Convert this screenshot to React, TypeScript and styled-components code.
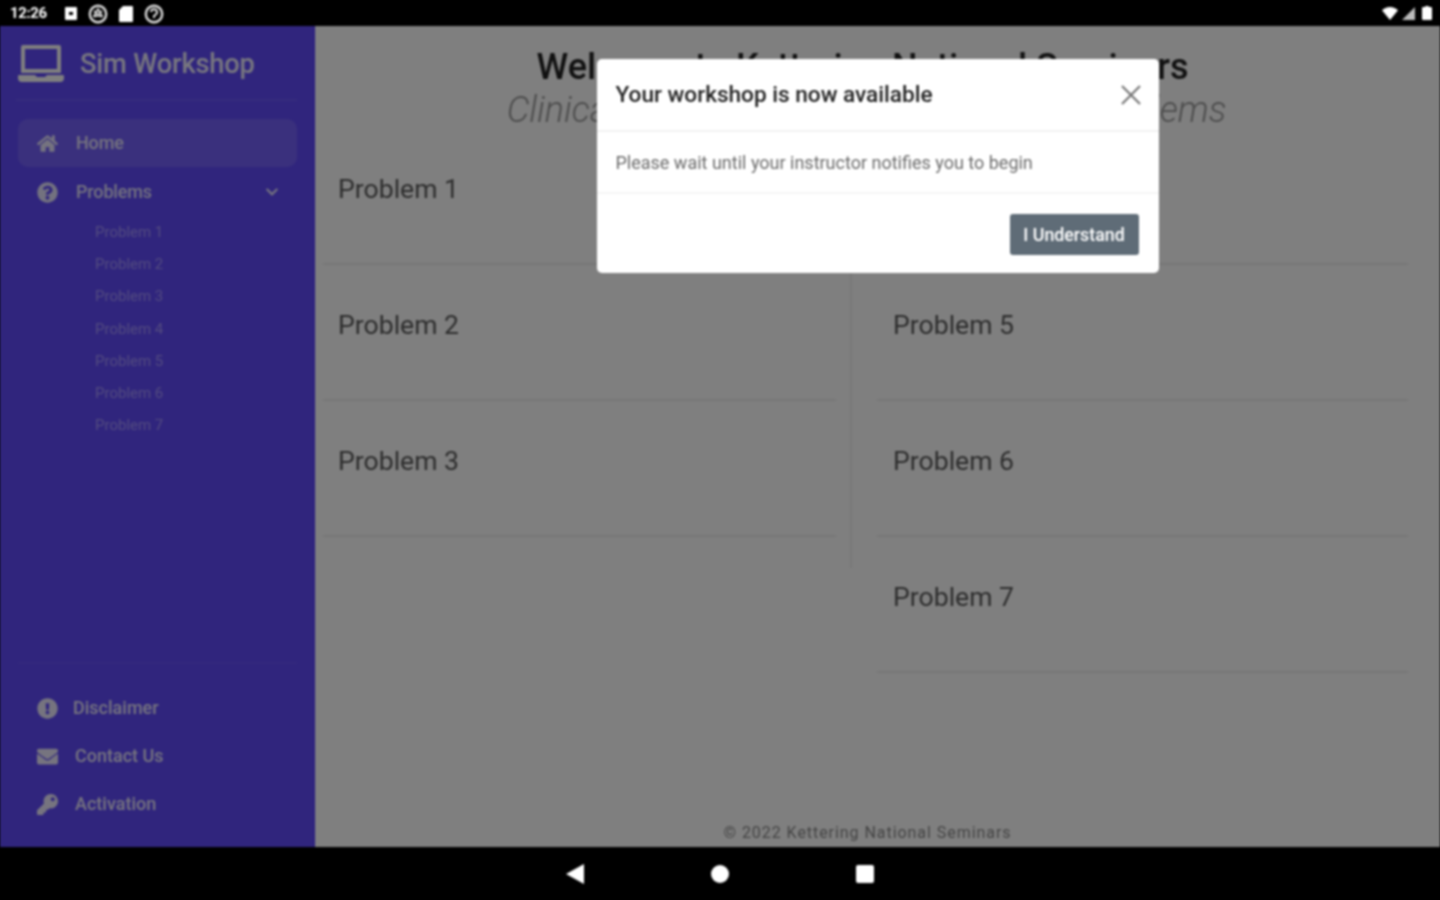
import React from 'react';
import styled, { createGlobalStyle } from 'styled-components';
import { FaChevronDown, FaEnvelope, FaExclamationCircle, FaHome, FaKey, FaQuestionCircle } from 'react-icons/fa';

const GlobalStyle = createGlobalStyle`
  html, body, #root {
    margin: 0;
    height: 100%;
    background: #000;
  }
  * {
    box-sizing: border-box;
  }
  body {
    font-family: Roboto, "Liberation Sans", sans-serif;
    overflow: hidden;
  }
`;

const problemNames = [1, 2, 3, 4, 5, 6, 7].map((n) => `Problem ${n}`);

function LaptopIcon() {
  return (
    <svg width="46" height="38" viewBox="0 0 46 38" fill="#fff">
      <path d="M5 0h36a2 2 0 0 1 2 2v26H3V2a2 2 0 0 1 2-2zm2 4v20h32V4z" fillRule="evenodd" />
      <path d="M1 30h16l2 2h8l2-2h16a1 1 0 0 1 1 1v2a4 4 0 0 1-4 4H4a4 4 0 0 1-4-4v-2a1 1 0 0 1 1-1z" />
    </svg>
  );
}

function StatusIcons() {
  return (
    <StatusGroup>
      <svg width="12" height="13" viewBox="0 0 12 13">
        <path d="M1 0h10a1 1 0 0 1 1 1v11a1 1 0 0 1-1 1H1a1 1 0 0 1-1-1V1a1 1 0 0 1 1-1zm3 5v3h4V5z" fill="#fff" fillRule="evenodd" />
      </svg>
      <svg width="20" height="20" viewBox="0 0 20 20" fill="none" stroke="#ddd">
        <circle cx="10" cy="10" r="8.2" strokeWidth="2.4" />
        <path d="M10 5l4 7H6zM6 7l8 6M14 7l-8 6" strokeWidth="1.6" />
      </svg>
      <svg width="14" height="16" viewBox="0 0 14 16">
        <path d="M4 0h9a1 1 0 0 1 1 1v14a1 1 0 0 1-1 1H1a1 1 0 0 1-1-1V4z" fill="#fff" />
      </svg>
      <svg width="20" height="20" viewBox="0 0 20 20" fill="none" stroke="#ddd">
        <circle cx="10" cy="10" r="8.2" strokeWidth="2.4" />
        <path d="M7 8a3 3 0 1 1 4 3l-1 1v2" strokeWidth="2" />
      </svg>
    </StatusGroup>
  );
}

function SystemIcons() {
  return (
    <SystemGroup>
      <svg width="16" height="13" viewBox="0 0 18 14" preserveAspectRatio="none">
        <path d="M0 3.500C2 1.500 5.500 0 9 0s7 1.500 9 3.500L9 14z" fill="#fff" />
      </svg>
      <TriangleIcon width="13" height="13" viewBox="0 0 14 14">
        <path d="M14 0v14H0z" fill="#bbb" />
      </TriangleIcon>
      <svg width="10" height="14" viewBox="0 0 9 14" preserveAspectRatio="none">
        <path d="M3 0h3v1h2a1 1 0 0 1 1 1v11a1 1 0 0 1-1 1H1a1 1 0 0 1-1-1V2a1 1 0 0 1 1-1h2z" fill="#fff" />
      </svg>
    </SystemGroup>
  );
}

export default function App(): React.ReactElement {
  return (
    <Screen>
      <GlobalStyle />
      <StatusBar>
        <Clock>12:26</Clock>
        <StatusIcons />
        <SystemIcons />
      </StatusBar>
      <Stage>
        <Sidebar>
          <Brand>
            <LaptopIcon />
            <BrandName>Sim Workshop</BrandName>
          </Brand>
          <NavItem $active>
            <FaHome />
            <NavLabel>Home</NavLabel>
          </NavItem>
          <NavItem>
            <FaQuestionCircle />
            <NavLabel>Problems</NavLabel>
            <Chevron>
              <FaChevronDown />
            </Chevron>
          </NavItem>
          <SubList>
            {problemNames.map((name) => (
              <SubItem key={name}>{name}</SubItem>
            ))}
          </SubList>
          <BottomNav>
            <BottomItem $gap={15}>
              <FaExclamationCircle />
              <NavLabel>Disclaimer</NavLabel>
            </BottomItem>
            <BottomItem $gap={17}>
              <FaEnvelope />
              <NavLabel>Contact Us</NavLabel>
            </BottomItem>
            <BottomItem $gap={17}>
              <FaKey />
              <NavLabel>Activation</NavLabel>
            </BottomItem>
          </BottomNav>
        </Sidebar>
        <Main>
          <Heading>
            <Title>Welcome to Kettering National Seminars</Title>
            <Subtitle>Clinical Case Simulations Workshop - Problems</Subtitle>
          </Heading>
          <Columns>
            <LeftColumn>
              {problemNames.slice(0, 3).map((name) => (
                <ProblemRow key={name}>{name}</ProblemRow>
              ))}
            </LeftColumn>
            <RightColumn>
              {problemNames.slice(3).map((name) => (
                <ProblemRow key={name}>{name}</ProblemRow>
              ))}
            </RightColumn>
          </Columns>
          <Footer>© 2022 Kettering National Seminars</Footer>
        </Main>
        <Backdrop>
          <Modal>
            <ModalHeader>
              <ModalTitle>Your workshop is now available</ModalTitle>
              <CloseIcon width="20" height="20" viewBox="0 0 20 20">
                <path d="M1 1l18 18M19 1L1 19" />
              </CloseIcon>
            </ModalHeader>
            <ModalBody>Please wait until your instructor notifies you to begin</ModalBody>
            <ModalFooter>
              <UnderstandButton>I Understand</UnderstandButton>
            </ModalFooter>
          </Modal>
        </Backdrop>
      </Stage>
      <NavBar>
        <svg width="18" height="20" viewBox="0 0 18 20">
          <path d="M18 0v20L0 10z" fill="#fff" />
        </svg>
        <HomeDot />
        <RecentSquare />
      </NavBar>
    </Screen>
  );
}

const Screen = styled.div`
  width: 1440px;
  height: 900px;
  display: flex;
  flex-direction: column;
  filter: blur(0.8px);
`;

const StatusBar = styled.div`
  height: 26px;
  flex: none;
  display: flex;
  align-items: center;
  padding: 0 8px 0 10px;
  background: #000;
`;

const Clock = styled.span`
  width: 55px;
  color: #fff;
  font-size: 15px;
  font-weight: 700;
  letter-spacing: -0.4px;
`;

const StatusGroup = styled.div`
  display: flex;
  align-items: center;
  gap: 11px;
  margin-top: 1px;
`;

const SystemGroup = styled.div`
  display: flex;
  align-items: center;
  gap: 7px;
  margin-left: auto;
`;

const TriangleIcon = styled.svg`
  margin-left: -3px;
`;

const Stage = styled.div`
  position: relative;
  flex: 1;
  min-height: 0;
  display: flex;
  background: #fff;
`;

const Sidebar = styled.aside`
  width: 315px;
  flex: none;
  display: flex;
  flex-direction: column;
  padding: 0 17px 0 18px;
  background: #604afa;
  border-right: 1px solid #4a30ff;
  color: #fff;
`;

const Brand = styled.div`
  height: 75px;
  margin: 0 0 18px -2px;
  padding: 2px 0 0 2px;
  display: flex;
  align-items: center;
  gap: 16px;
  border-bottom: 2px solid rgba(255, 255, 255, 0.08);

  svg {
    flex: none;
    margin-top: 1px;
  }
`;

const BrandName = styled.span`
  font-size: 27.3px;
  font-weight: 500;
  letter-spacing: -0.2px;
  color: #fff;
  opacity: 0.9;
`;

const NavLabel = styled.span`
  margin-top: -2px;
`;

const NavItem = styled.div<{ $active?: boolean }>`
  height: 48px;
  display: flex;
  align-items: center;
  gap: 18px;
  padding: 0 18px 0 19px;
  border-radius: 10px;
  font-size: 18px;
  font-weight: 500;
  letter-spacing: -0.15px;
  background: ${({ $active }) => ($active ? 'rgba(255, 255, 255, 0.13)' : 'transparent')};
  color: rgba(255, 255, 255, 0.85);

  & + & {
    margin-top: 1px;
  }

  svg {
    width: 21px;
    height: 21px;
    flex: none;
  }
`;

const Chevron = styled.span`
  margin-left: auto;
  display: flex;

  svg {
    width: 14px;
    height: 14px;
  }
`;

const SubList = styled.div`
  display: flex;
  flex-direction: column;
  padding-left: 77px;
`;

const SubItem = styled.div`
  height: 32.2px;
  line-height: 32px;
  font-size: 15px;
  color: #a596ff;
`;

const BottomNav = styled.div`
  margin: auto 0 19px;
  padding: 20px 0 0 19px;
  border-top: 2px solid rgba(255, 255, 255, 0.04);
`;

const BottomItem = styled.div<{ $gap: number }>`
  height: 48px;
  display: flex;
  align-items: center;
  gap: ${({ $gap }) => $gap}px;
  font-size: 18px;
  font-weight: 500;
  color: rgba(255, 255, 255, 0.88);

  svg {
    width: 21px;
    height: 21px;
    flex: none;
  }
`;

const Main = styled.main`
  flex: 1;
  min-width: 0;
  display: flex;
  flex-direction: column;
  padding: 20px 32px 0 8px;
  background: #fff;
`;

const Heading = styled.header`
  height: 83px;
  text-align: center;
`;

const Title = styled.h1`
  margin: 0;
  padding-right: 6px;
  font-size: 36px;
  line-height: 42px;
  font-weight: 500;
  color: #222;
`;

const Subtitle = styled.h2`
  margin: 0;
  padding-left: 2px;
  font-size: 36px;
  line-height: 44px;
  font-weight: 300;
  font-style: italic;
  letter-spacing: -0.07px;
  color: #999;
`;

const Columns = styled.div`
  display: flex;
`;

const LeftColumn = styled.div`
  width: 529px;
  height: 439px;
  padding-right: 14px;
  border-right: 2px solid #f0f0f0;
`;

const RightColumn = styled.div`
  width: 531px;
  margin-left: 25px;
`;

const ProblemRow = styled.div`
  height: 136px;
  padding: 45px 0 0 15px;
  font-size: 26.6px;
  line-height: 30px;
  color: #5a5a5a;
  border-bottom: 2px solid #eee;

  ${RightColumn} & {
    padding-left: 16px;
  }
`;

const Footer = styled.footer`
  margin-top: auto;
  height: 24px;
  padding-left: 4px;
  text-align: center;
  font-size: 16px;
  letter-spacing: 0.95px;
  color: #888;
`;

const Backdrop = styled.div`
  position: absolute;
  inset: 0;
  display: flex;
  align-items: flex-start;
  justify-content: center;
  padding: 33px 0 0 315px;
  background: rgba(0, 0, 0, 0.5);
`;

const Modal = styled.div`
  width: 562px;
  height: 214px;
  display: flex;
  flex-direction: column;
  border-radius: 5px;
  background: #fff;
`;

const ModalHeader = styled.div`
  height: 73px;
  flex: none;
  display: flex;
  align-items: center;
  justify-content: space-between;
  padding: 0 18px 0 19px;
  border-bottom: 2px solid #f2f2f2;
`;

const ModalTitle = styled.h3`
  margin: 0;
  font-size: 22.6px;
  font-weight: 500;
  color: #222;
`;

const CloseIcon = styled.svg`
  fill: none;
  stroke: #777;
  stroke-width: 2.2;
`;

const ModalBody = styled.div`
  height: 62px;
  flex: none;
  display: flex;
  align-items: center;
  padding: 0 19px;
  font-size: 18px;
  color: #6b6b6b;
  border-bottom: 2px solid #f5f5f5;
`;

const ModalFooter = styled.div`
  flex: 1;
  display: flex;
  justify-content: flex-end;
  align-items: flex-start;
  padding: 20px 20px 0;
`;

const UnderstandButton = styled.button`
  width: 129px;
  height: 41px;
  border: none;
  border-radius: 3px;
  background: #5f6c77;
  color: #fff;
  font-family: inherit;
  font-size: 17.8px;
  font-weight: 500;
  padding: 0;
`;

const NavBar = styled.nav`
  height: 53px;
  flex: none;
  display: flex;
  align-items: center;
  justify-content: center;
  padding-right: 1px;
  gap: 127px;
  background: #000;
`;

const HomeDot = styled.span`
  width: 18px;
  height: 18px;
  border-radius: 50%;
  background: #fff;
`;

const RecentSquare = styled.span`
  width: 18px;
  height: 18px;
  border-radius: 2px;
  background: #fff;
`;
